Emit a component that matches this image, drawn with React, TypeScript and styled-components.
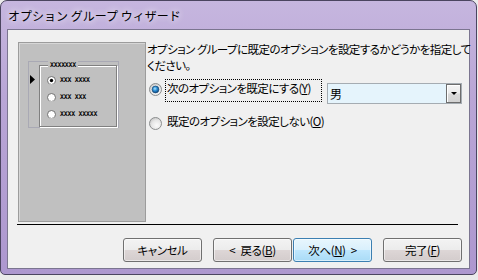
import React, { useId } from 'react';
import styled, { createGlobalStyle } from 'styled-components';

const JP = `"Noto Sans CJK JP", "Noto Sans", sans-serif`;

const GlobalStyle = createGlobalStyle`
    html, body {
        margin: 0;
        padding: 0;
    }
    body {
        width: 478px;
        height: 280px;
        overflow: hidden;
        background: #ebebeb;
        font-family: ${JP};
    }
`;

// window frame
const Frame = styled.div`
    box-sizing: border-box;
    width: 477px;
    height: 275px;
    border: 1px solid #4b4560;
    border-radius: 7px 7px 5px 5px;
    background: linear-gradient(180deg, #c6b6df 0%, #b9a6d6 35%, #ad97cf 100%);
    padding: 0 6px 5px 6px;
    display: flex;
    flex-direction: column;
`;

const TitleBar = styled.div`
    height: 28px;
    display: flex;
    align-items: center;
    padding-left: 1px;
    font: 12px ${JP};
    color: #000;
    text-shadow: 0 0 6px rgba(255, 255, 255, 0.9), 0 0 10px rgba(255, 255, 255, 0.6);
    white-space: pre;
`;

const Client = styled.div`
    flex: 1;
    background: #f0f0f0;
    border: 1px solid #7b7590;
    display: flex;
    flex-direction: column;
    padding: 12px 0 0 10px;
`;

const TopArea = styled.div`
    display: flex;
    height: 180px;
`;

// left preview of the option group
const Preview = styled.div`
    flex-shrink: 0;
    box-sizing: border-box;
    width: 128px;
    height: 180px;
    background: #c0c0c0;
    border: 1px solid #9c9c9c;
    box-shadow: inset 1px 1px 0 #d6d6d6;
    padding: 18px 0 0 9px;
`;

const GroupBox = styled.div`
    box-sizing: border-box;
    width: 91px;
    height: 67px;
    border: 1px solid #a9a9b4;
    display: flex;
`;

const PointerCol = styled.div`
    display: flex;
    align-items: flex-start;
    width: 10px;
    padding: 13px 0 0 1px;
    box-sizing: border-box;
`;

const Etched = styled.div`
    position: relative;
    box-sizing: border-box;
    width: 78px;
    height: 62px;
    margin-top: 3px;
    border: 1px solid #808080;
    box-shadow: inset 1px 1px 0 #fff, 1px 1px 0 #fff;
    padding: 10px 0 0 7px;
    display: flex;
    flex-direction: column;
    gap: 8px;
`;

const Hatch = styled.span`
    font: bold 6.5px 'DejaVu Sans Mono', monospace;
    line-height: 9px;
    letter-spacing: -0.2px;
    color: #000;
    white-space: pre;
`;

const Legend = styled(Hatch)`
    position: absolute;
    top: -5px;
    left: 8px;
    padding: 0 2px;
    background: #c0c0c0;
`;

const MiniRow = styled.div`
    display: flex;
    align-items: center;
    gap: 4px;
    height: 9px;
`;

// right side
const Content = styled.div`
    flex: 1;
    min-width: 0;
    padding-left: 1px;
    font: 11.5px ${JP};
    font-feature-settings: 'palt';
    letter-spacing: -0.55px;
    color: #000;
`;

const Prompt = styled.div`
    margin-top: -1px;
    line-height: 16px;
    white-space: nowrap;
`;

const OptionRow = styled.div<{ $gap: number }>`
    display: flex;
    align-items: flex-start;
    margin-top: ${(p) => p.$gap}px;
`;

const RadioWrap = styled.span`
    display: flex;
    margin: 4px 0 0 2px;
`;

const OptionLabel = styled.div<{ $focused?: boolean }>`
    box-sizing: border-box;
    margin-left: 3px;
    line-height: 16px;
    white-space: nowrap;
    ${(p) =>
        p.$focused
            ? `
        width: 157px;
        height: 23px;
        border: 1px dotted #000;
        padding-left: 1px;
    `
            : `
        padding-left: 2px;
    `}
`;

const Combo = styled.div`
    flex-shrink: 0;
    box-sizing: border-box;
    width: 135px;
    height: 21px;
    margin: 4px 0 0 5px;
    border: 1px solid #a5acb2;
    background: #e5f4fc;
    display: flex;
`;

const ComboText = styled.div`
    flex: 1;
    padding-left: 2px;
    line-height: 19px;
    font-size: 12px;
`;

const DropButton = styled.div`
    box-sizing: border-box;
    width: 15px;
    height: 19px;
    border: 1px solid #6d6d6d;
    box-shadow: inset 1px 1px 0 #fff;
    background: linear-gradient(180deg, #f4f4f4 0%, #ececec 45%, #d9d9d9 55%, #d2d2d2 100%);
    display: flex;
    align-items: center;
    justify-content: center;
`;

const Separator = styled.div`
    width: 441px;
    height: 1px;
    margin: 2px 0 0 -1px;
    background: #000;
`;

const ButtonBar = styled.div`
    display: flex;
    justify-content: flex-end;
    padding-right: 7px;
    margin-top: 13px;
`;

const Button = styled.div<{ $primary?: boolean; $gap: number }>`
    box-sizing: border-box;
    width: 79px;
    height: 24px;
    margin-left: ${(p) => p.$gap}px;
    border: 1px solid ${(p) => (p.$primary ? '#3c7fb1' : '#707070')};
    border-radius: 3px;
    background: ${(p) =>
        p.$primary
            ? 'linear-gradient(180deg, #e8f6fd 0%, #d9f0fc 48%, #bee6fd 52%, #a9dbf6 100%)'
            : 'linear-gradient(180deg, #f3f3f3 0%, #ececec 48%, #ddd6d6 52%, #d3cccc 100%)'};
    box-shadow: inset 0 0 0 1px rgba(255, 255, 255, 0.55);
    display: flex;
    align-items: center;
    justify-content: center;
    font: 11.5px ${JP};
    font-feature-settings: 'palt';
    letter-spacing: -0.4px;
    word-spacing: 3px;
    color: #000;
    white-space: pre;
`;

const U = styled.span`
    text-decoration: underline;
    text-underline-offset: 1px;
`;

const AeroRadio = ({ checked }: { checked?: boolean }) => {
    const id = useId().replace(/:/g, '');
    return (
        <svg width="13" height="13" viewBox="0 0 13 13">
            <defs>
                <radialGradient id={`f${id}`} cx="0.6" cy="0.65" r="0.7">
                    <stop offset="0" stopColor="#fbfbfb" />
                    <stop offset="0.6" stopColor="#e6e6e6" />
                    <stop offset="1" stopColor="#c4c4c4" />
                </radialGradient>
                <radialGradient id={`d${id}`} cx="0.42" cy="0.38" r="0.65">
                    <stop offset="0" stopColor="#b6e6ff" />
                    <stop offset="0.45" stopColor="#2f93d8" />
                    <stop offset="1" stopColor="#0b3f78" />
                </radialGradient>
            </defs>
            <circle cx="6.5" cy="6.5" r="6" fill={`url(#f${id})`} stroke="#8c8e8f" />
            {checked && (
                <circle cx="6.5" cy="6.5" r="3.4" fill={`url(#d${id})`} stroke="#1a4b78" strokeWidth="0.7" />
            )}
        </svg>
    );
};

const MiniRadio = ({ checked }: { checked?: boolean }) => (
    <svg width="9" height="9" viewBox="0 0 9 9">
        <circle cx="4.5" cy="4.5" r="4" fill="#fff" stroke="#6e6e6e" />
        <path d="M1.6 7.2 A4 4 0 0 0 7.6 7.1" stroke="#cfcfcf" fill="none" />
        {checked && <circle cx="4.5" cy="4.5" r="1.7" fill="#000" />}
    </svg>
);

const Pointer = () => (
    <svg width="5" height="9" viewBox="0 0 5 9" style={{ display: 'block' }}>
        <polygon points="0,0 5,4.5 0,9" fill="#000" />
    </svg>
);

const DownArrow = () => (
    <svg width="6" height="3" viewBox="0 0 6 3">
        <polygon points="0,0 6,0 3,3" fill="#000" />
    </svg>
);

const miniOptions = [
    { label: 'XXX XXXX', checked: true },
    { label: 'XXX XXX', checked: false },
    { label: 'XXXX XXXXX', checked: false },
];

export default function App() {
    return (
        <>
            <GlobalStyle />
            <Frame>
                <TitleBar>オプション グループ ウィザード</TitleBar>
                <Client>
                    <TopArea>
                        <Preview>
                            <GroupBox>
                                <PointerCol>
                                    <Pointer />
                                </PointerCol>
                                <Etched>
                                    <Legend>XXXXXXX</Legend>
                                    {miniOptions.map((o) => (
                                        <MiniRow key={o.label}>
                                            <MiniRadio checked={o.checked} />
                                            <Hatch>{o.label}</Hatch>
                                        </MiniRow>
                                    ))}
                                </Etched>
                            </GroupBox>
                        </Preview>
                        <Content>
                            <Prompt>
                                オプション グループに既定のオプションを設定するかどうかを指定して
                                <br />
                                ください。
                            </Prompt>
                            <OptionRow $gap={6}>
                                <RadioWrap>
                                    <AeroRadio checked />
                                </RadioWrap>
                                <OptionLabel $focused>
                                    次のオプションを既定にする(<U>Y</U>)
                                </OptionLabel>
                                <Combo>
                                    <ComboText>男</ComboText>
                                    <DropButton>
                                        <DownArrow />
                                    </DropButton>
                                </Combo>
                            </OptionRow>
                            <OptionRow $gap={9}>
                                <RadioWrap>
                                    <AeroRadio />
                                </RadioWrap>
                                <OptionLabel>
                                    既定のオプションを設定しない(<U>O</U>)
                                </OptionLabel>
                            </OptionRow>
                        </Content>
                    </TopArea>
                    <Separator />
                    <ButtonBar>
                        <Button $gap={0}>キャンセル</Button>
                        <Button $gap={11}>
                            {'< 戻る('}
                            <U>B</U>)
                        </Button>
                        <Button $gap={1} $primary>
                            次へ(<U>N</U>
                            {') >'}
                        </Button>
                        <Button $gap={11}>
                            完了(<U>F</U>)
                        </Button>
                    </ButtonBar>
                </Client>
            </Frame>
        </>
    );
}
